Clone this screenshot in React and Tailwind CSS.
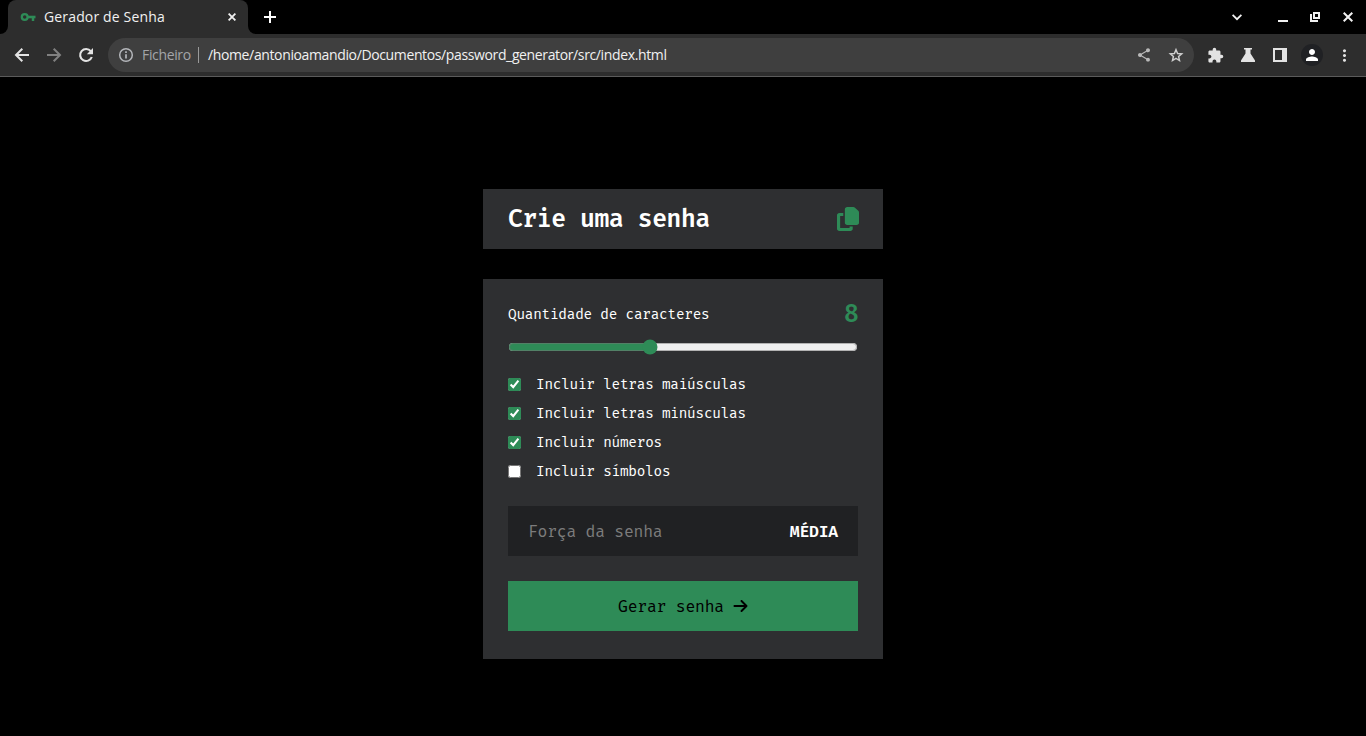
import { useState } from "react";
import { MdShare, MdExtension, MdPerson, MdMoreVert } from "react-icons/md";

function KeyIcon() {
  return (
    <svg className="size-4" viewBox="0 0 16 16" fill="none" stroke="#2e8b57">
      <circle cx="4.700" cy="8" r="2.900" strokeWidth="2.300" />
      <path d="M7.500 8H15.500" strokeWidth="2.600" />
      <path d="M13 8v4" strokeWidth="2.500" />
    </svg>
  );
}

function ArrowIcon({ forward = false }) {
  return (
    <svg className={forward ? "ml-3 size-5 rotate-180 text-[#808080]" : "size-5"} viewBox="0 0 20 20" fill="none" stroke="currentColor" strokeWidth="2">
      <path d="M10.300 3.700L4 10l6.300 6.300M4 10h13" />
    </svg>
  );
}

function ReloadIcon() {
  return (
    <svg className="ml-3 size-5" viewBox="0 0 20 20" fill="none">
      <path d="M14.800 6.200A6 6 0 1 0 15.800 12" stroke="currentColor" strokeWidth="2.100" />
      <path d="M17 3v6.200h-6.200z" fill="currentColor" />
    </svg>
  );
}

function InfoIcon() {
  return (
    <svg className="size-4" viewBox="0 0 16 16" fill="none" stroke="#b4b6ba">
      <circle cx="8" cy="8" r="6.300" strokeWidth="1.500" />
      <path d="M8 7.200v4.300M8 4.300v1.700" strokeWidth="1.700" />
    </svg>
  );
}

function StarIcon() {
  return (
    <svg className="ml-4 size-4" viewBox="0 0 16 16" fill="none" stroke="#cfcfcf" strokeWidth="1.500">
      <path d="M8 2.700l1.600 3.800 4.100.35-3.100 2.700.9 4L8 11.400l-3.500 2.150.9-4-3.100-2.700 4.100-.35z" />
    </svg>
  );
}

function TabStrip() {
  return (
    <div className="flex h-[34px] bg-black text-[#f1f1f1]">
      <div className="flex w-2 items-end bg-[#2d2d2d]">
        <div className="h-full w-2 rounded-br-lg bg-black" />
      </div>
      <div className="flex w-60 items-center rounded-t-lg bg-[#2d2d2d] pl-3">
        <KeyIcon />
        <span className="ml-2 flex-1 whitespace-nowrap pb-[2px] font-['Open_Sans',sans-serif] text-[14px] tracking-[0.15px]">Gerador de Senha</span>
        <svg className="mr-3 size-2" viewBox="0 0 8 8" stroke="currentColor" strokeWidth="1.8"><path d="M.6.6l6.8 6.8M7.4.6L.6 7.4" /></svg>
      </div>
      <div className="flex w-2 bg-[#2d2d2d]">
        <div className="h-full w-2 rounded-bl-lg bg-black" />
      </div>
      <div className="flex flex-1 items-center pl-2">
        <svg className="size-3" viewBox="0 0 12 12" stroke="#fff" strokeWidth="2"><path d="M6 0v12M0 6h12" /></svg>
      </div>
      <div className="flex items-center pr-[13px]">
        <svg className="mr-9 h-2 w-[10px]" viewBox="0 0 10 8" fill="none" stroke="currentColor" strokeWidth="1.8"><path d="M.6 1.9L5 6.2l4.4-4.3" /></svg>
        <svg className="mr-[22px] h-[10px] w-[10px]" viewBox="0 0 10 10" fill="currentColor"><path d="M0 8h10v2H0z" /></svg>
        <svg className="mr-[23px] h-[10px] w-[10px]" viewBox="0 0 10 10" fill="none" stroke="currentColor" strokeWidth="2"><path d="M4 1h5v5H4zM1 2v7h7" /></svg>
        <svg className="size-[10px]" viewBox="0 0 10 10" stroke="currentColor" strokeWidth="2"><path d="M.7.7l8.6 8.6M9.3.7L.7 9.3" /></svg>
      </div>
    </div>
  );
}

function Toolbar() {
  return (
    <div className="flex h-[43px] items-center border-b border-[#5b5b5b] bg-[#2d2d2d] pl-3 pr-[11px] text-[#e3e3e3]">
      <ArrowIcon />
      <ArrowIcon forward />
      <ReloadIcon />
      <div className="ml-3 flex h-[34px] w-[1086px] items-center rounded-full bg-[#3f3f3f] pl-[10px] pr-[10px] font-['Open_Sans',sans-serif] text-[14px]">
        <InfoIcon />
        <span className="ml-2 w-[49px] whitespace-nowrap pb-[2px] text-[#a3a5a9] tracking-[-0.35px]">Ficheiro</span>
        <div className="ml-[7px] h-4 w-px bg-[#9a9a9a]" />
        <span className="ml-[9px] flex-1 whitespace-nowrap pb-[2px] text-[#f1f1f1] tracking-[-0.37px]">/home/antonioamandio/Documentos/password_generator/src/index.html</span>
        <MdShare className="size-4 text-[#bababa]" />
        <StarIcon />
      </div>
      <MdExtension className="ml-[13px] size-[17px]" />
      <svg className="ml-[17px] h-[14px] w-[14px]" viewBox="0 0 14 14" fill="currentColor"><path d="M3 0h8v1.500H9.500v4L14 12.500V14H0v-1.500l4.500-7v-4H3z" /></svg>
      <svg className="ml-[18px] h-[14px] w-[14px]" viewBox="0 0 14 14" fill="none" stroke="currentColor" strokeWidth="2"><path d="M1 1h12v12H1z" /><path d="M11 1v12" strokeWidth="4" /></svg>
      <div className="ml-[14px] flex size-[22px] items-center justify-center rounded-full bg-[#202124]">
        <MdPerson className="size-[18px] text-white" />
      </div>
      <MdMoreVert className="ml-3 size-[19px]" />
    </div>
  );
}

function CopyIcon() {
  return (
    <svg className="h-6 w-[22px]" viewBox="0 0 448 512" preserveAspectRatio="none" fill="#2e8b57">
      <path d="M208 0H332.1c12.700 0 24.900 5.100 33.900 14.100l67.900 67.900c9 9 14.100 21.200 14.100 33.900V336c0 26.500-21.500 48-48 48H208c-26.500 0-48-21.500-48-48V48c0-26.500 21.500-48 48-48zM48 128h80v64H64V448H256V416h64v48c0 26.500-21.500 48-48 48H48c-26.500 0-48-21.500-48-48V176c0-26.500 21.500-48 48-48z" />
    </svg>
  );
}

function Option({ label, initial }) {
  const [on, setOn] = useState(initial);
  return (
    <label className="flex h-[29px] items-center text-[14px]">
      <input type="checkbox" checked={on} onChange={() => setOn(!on)} className="mr-[15px] size-[13px] accent-[#2e8b57]" />
      {label}
    </label>
  );
}

export default function App() {
  const [length, setLength] = useState(8);
  return (
    <div className="flex h-[736px] w-[1366px] flex-col overflow-hidden bg-black">
      <TabStrip />
      <Toolbar />
      <main className="flex flex-1 flex-col items-center pt-28 font-['Fira_Code','Fira_Mono','DejaVu_Sans_Mono','Liberation_Mono',monospace] tracking-[-0.22px] text-white">
        <header className="flex h-[60px] w-[400px] items-center justify-between bg-[#2e2f31] pl-[25px] pr-6">
          <h1 className="pt-[2px] text-[24px] font-semibold tracking-[-0.35px]">Crie uma senha</h1>
          <CopyIcon />
        </header>
        <section className="mt-[30px] flex h-[380px] w-[400px] flex-col bg-[#2e2f31] px-[25px] pt-[17px]">
          <div className="flex h-9 items-center justify-between">
            <span className="text-[14px]">Quantidade de caracteres</span>
            <span className="pt-[2px] text-[24px] font-semibold tracking-[-0.7px] text-[#2e8b57]">{length}</span>
          </div>
          <input type="range" min="0" max="20" value={length} onChange={(e) => setLength(Number(e.target.value))} className="mt-[7px] block h-4 w-[350px] accent-[#2e8b57]" />
          <div className="mt-[15px] flex flex-col">
            <Option label="Incluir letras maiúsculas" initial={true} />
            <Option label="Incluir letras minúsculas" initial={true} />
            <Option label="Incluir números" initial={true} />
            <Option label="Incluir símbolos" initial={false} />
          </div>
          <div className="mt-5 flex h-[50px] items-center justify-between bg-[#202123] px-5 text-[16px]">
            <span className="pt-[2px] tracking-[-0.25px] text-[#7c7c7c]">Força da senha</span>
            <span className="pt-px font-semibold">MÉDIA</span>
          </div>
          <button className="mt-[25px] flex h-[50px] items-center justify-center bg-[#2e8b57] text-[16px] tracking-[-0.22px] text-black">
            <span className="pt-[2px]">Gerar senha</span>
            <svg className="ml-[9px] h-4 w-[15px]" viewBox="0 0 448 512" fill="currentColor">
              <path d="M438.600 278.600c12.500-12.500 12.500-32.800 0-45.300l-160-160c-12.500-12.500-32.800-12.500-45.300 0s-12.500 32.800 0 45.300L338.800 224 32 224c-17.700 0-32 14.300-32 32s14.300 32 32 32l306.700 0L233.400 393.400c-12.500 12.500-12.500 32.800 0 45.300s32.800 12.500 45.300 0l160-160z" />
            </svg>
          </button>
        </section>
      </main>
    </div>
  );
}
